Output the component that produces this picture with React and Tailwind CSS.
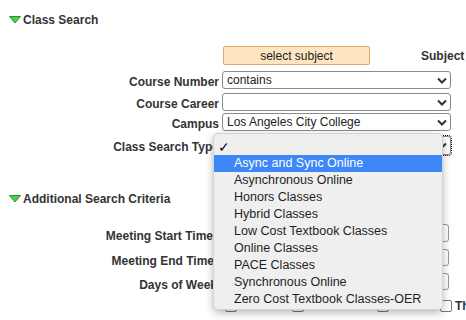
import React from "react";

const items = [
  "Async and Sync Online",
  "Asynchronous Online",
  "Honors Classes",
  "Hybrid Classes",
  "Low Cost Textbook Classes",
  "Online Classes",
  "PACE Classes",
  "Synchronous Online",
  "Zero Cost Textbook Classes-OER",
];

function Triangle() {
  return (
    <svg width="12" height="8" viewBox="0 0 12 8" className="shrink-0">
      <polygon points="0.5,0.5 11.5,0.5 6,7" fill="#4ccf4c" stroke="#2f8f2f" strokeWidth="1" />
    </svg>
  );
}

function Chevron() {
  return (
    <svg width="10" height="7" viewBox="0 0 10 7" className="shrink-0">
      <polyline points="1,1.5 5,5.5 9,1.5" fill="none" stroke="#333" strokeWidth="2" />
    </svg>
  );
}

function Heading({ children, className }) {
  return (
    <div className={`flex items-center gap-[2px] pl-[9px] h-[16px] ${className}`}>
      <Triangle />
      <span className="text-[12px] font-bold text-[#333]">{children}</span>
    </div>
  );
}

function SelectRow({ label, value, className, focused }) {
  return (
    <div className={`flex items-center ${className}`}>
      <div className="w-[219px] shrink-0 pt-[3px] text-right text-[12px] font-bold text-[#333] whitespace-nowrap">
        {label}
      </div>
      <div
        className={`ml-[3px] w-[229px] shrink-0 h-full flex items-center justify-between pl-[4px] pr-[3px] bg-white border border-[#8a8a8a] rounded-[3px] text-[12px] text-[#222] ${
          focused ? "outline outline-1 outline-dotted outline-black" : ""
        }`}
      >
        <span>{value}</span>
        <Chevron />
      </div>
    </div>
  );
}

function InputRow({ label, labelWidth, className }) {
  return (
    <div className={`flex items-stretch ${className}`}>
      <div className={`${labelWidth} shrink-0 pt-[3px] text-right text-[12px] font-bold text-[#333] whitespace-nowrap`}>
        {label}
      </div>
      <div className="ml-auto mr-[17px] w-[227px] shrink-0 bg-white border border-[#9a9a9a] rounded-[3px]" />
    </div>
  );
}

function Day({ label, width }) {
  return (
    <div className={`flex items-center gap-[3px] shrink-0 ${width}`}>
      <div className="w-[12px] h-[12px] shrink-0 border border-[#777] rounded-[2px] bg-white" />
      <span className="text-[12px] font-bold text-[#333]">{label}</span>
    </div>
  );
}

export default function App() {
  return (
    <div
      className="relative w-[466px] h-[320px] overflow-hidden bg-white"
      style={{ fontFamily: '"Liberation Sans", Arial, sans-serif' }}
    >
      <Heading className="mt-[12px]">Class Search</Heading>

      {/* select subject */}
      <div className="flex items-center mt-[18px] h-[19px]">
        <div className="ml-[223px] w-[147px] shrink-0 h-full flex items-center justify-center bg-[#fde5c2] border border-[#e2a86c] rounded-[2px] text-[12px] text-[#222]">
          select subject
        </div>
        <span className="ml-[51px] text-[12px] font-bold text-[#333] whitespace-nowrap">Subject</span>
      </div>

      <SelectRow label="Course Number" value="contains" className="mt-[6px] h-[18px]" />
      <SelectRow label="Course Career" value="" className="mt-[4px] h-[18px]" />
      <SelectRow label="Campus" value="Los Angeles City College" className="mt-[2px] h-[18px]" />
      <SelectRow label="Class Search Type" value="" className="mt-[5px] h-[19px]" focused />

      <Heading className="mt-[36px]">Additional Search Criteria</Heading>

      <InputRow label="Meeting Start Time" labelWidth="w-[213px]" className="mt-[17px] h-[18px]" />
      <InputRow label="Meeting End Time" labelWidth="w-[214px]" className="mt-[7px] h-[17px]" />
      <InputRow label="Days of Week" labelWidth="w-[217px]" className="mt-[7px] h-[17px]" />

      <div className="flex items-center mt-[9px] pl-[225px] h-[13px]">
        <Day label="Mon" width="w-[67px]" />
        <Day label="Tues" width="w-[85px]" />
        <Day label="Wed" width="w-[63px]" />
        <Day label="Th" width="w-[26px]" />
      </div>

      {/* open dropdown menu */}
      <div className="absolute left-[213px] top-[133px] w-[230px] h-[177px] pt-[4px] bg-[#efefef] border border-[#d4d4d4] rounded-[5px] shadow-[0_3px_9px_rgba(0,0,0,0.28)] text-[12.5px] text-[#1f1f1f]">
        <div className="h-[17px] flex items-center pl-[4px] text-[14px] leading-none text-black">✓</div>
        {items.map((it, i) => (
          <div
            key={it}
            className={`h-[17px] flex items-center pl-[20px] whitespace-nowrap ${
              i === 0 ? "bg-[#3d87f7] text-white" : ""
            }`}
          >
            {it}
          </div>
        ))}
      </div>
    </div>
  );
}
